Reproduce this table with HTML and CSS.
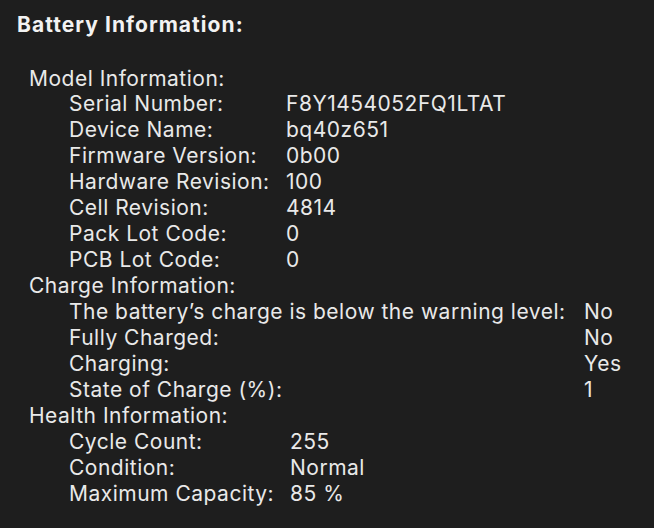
FILE: index.html
```html
<!DOCTYPE html>
<html>
<head>
<meta charset="utf-8">
<link rel="stylesheet" href="styles.css">
</head>
<body>
<div class="panel">
  <h1 class="title">Battery Information:</h1>
  <div class="section">
    <div class="section-head">Model Information:</div>
    <div class="rows rows-model">
      <div class="label">Serial Number:</div><div class="value">F8Y1454052FQ1LTAT</div>
      <div class="label">Device Name:</div><div class="value">bq40z651</div>
      <div class="label">Firmware Version:</div><div class="value">0b00</div>
      <div class="label">Hardware Revision:</div><div class="value">100</div>
      <div class="label">Cell Revision:</div><div class="value">4814</div>
      <div class="label">Pack Lot Code:</div><div class="value">0</div>
      <div class="label">PCB Lot Code:</div><div class="value">0</div>
    </div>
  </div>
  <div class="section">
    <div class="section-head">Charge Information:</div>
    <div class="rows rows-charge">
      <div class="label">The battery’s charge is below the warning level:</div><div class="value">No</div>
      <div class="label">Fully Charged:</div><div class="value">No</div>
      <div class="label">Charging:</div><div class="value">Yes</div>
      <div class="label">State of Charge (%):</div><div class="value">1</div>
    </div>
  </div>
  <div class="section">
    <div class="section-head">Health Information:</div>
    <div class="rows rows-health">
      <div class="label">Cycle Count:</div><div class="value">255</div>
      <div class="label">Condition:</div><div class="value">Normal</div>
      <div class="label">Maximum Capacity:</div><div class="value">85 %</div>
    </div>
  </div>
</div>
</body>
</html>
```

FILE: styles.css
```css
html, body {
  margin: 0;
  padding: 0;
  background: #1e1e1e;
}
body {
  width: 654px;
  height: 528px;
  overflow: hidden;
  font-family: Inter, "Liberation Sans", sans-serif;
  color: #e9e9e9;
}
.panel {
  padding: 12px 0 0 17px;
}
.title {
  margin: 0 0 27.5px 0;
  font-size: 21px;
  line-height: 26px;
  font-weight: 700;
  letter-spacing: 1.05px;
  color: #f2f2f2;
}
.section {
  padding-left: 12px;
  font-size: 21px;
  line-height: 25.94px;
  letter-spacing: 0.5px;
}
.rows {
  display: grid;
  padding-left: 40px;
}
.rows-model { grid-template-columns: 217px auto; }
.rows-charge { grid-template-columns: 515px auto; }
.rows-health { grid-template-columns: 221px auto; }
.label, .value, .section-head {
  white-space: nowrap;
}
```
